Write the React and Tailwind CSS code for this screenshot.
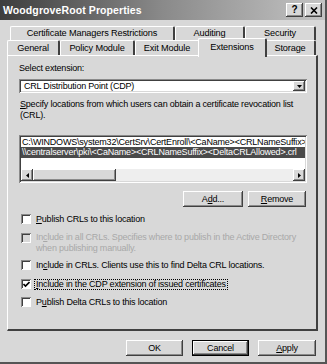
import React from "react";

const raised =
  "bg-[#d8d8d8] shadow-[inset_-1px_-1px_0_#404040,inset_1px_1px_0_#ffffff,inset_-2px_-2px_0_#8a8a8a]";
const sunken =
  "shadow-[inset_1px_1px_0_#8a8a8a,inset_-1px_-1px_0_#ffffff,inset_2px_2px_0_#404040,inset_-2px_-2px_0_#d8d8d8]";

function Tab({ w, children, sel }) {
  if (sel) {
    return (
      <div
        className={`relative z-10 -mx-[2px] -mt-[2px] h-[19px] bg-[#d8d8d8] border-l border-t border-white border-r-2 border-r-[#404040] rounded-t-[2px] flex items-center justify-center`}
        style={{ width: w + 4 }}
      >
        {children}
      </div>
    );
  }
  return (
    <div
      className="h-full bg-[#d8d8d8] border-l border-t border-white border-r-2 border-r-[#404040] rounded-t-[2px] flex items-center justify-center pt-[1px]"
      style={{ width: w }}
    >
      {children}
    </div>
  );
}

function Check({ checked, disabled }) {
  return (
    <div
      className={`w-[10px] h-[10px] shrink-0 flex items-center justify-center ${
        disabled ? "bg-[#d8d8d8]" : "bg-white"
      } shadow-[inset_1px_1px_0_#8a8a8a,inset_-1px_-1px_0_#ffffff,inset_2px_2px_0_#404040]`}
    >
      {checked && (
        <svg width="7" height="7" viewBox="0 0 7 7">
          <path d="M0.5 3 L2.5 5 L6.5 1" stroke="#000" strokeWidth="1.6" fill="none" />
        </svg>
      )}
    </div>
  );
}

function Btn({ w, children, def }) {
  return (
    <div
      className={`h-[16px] flex items-center justify-center ${
        def
          ? "bg-[#d8d8d8] border border-black shadow-[inset_-1px_-1px_0_#404040,inset_1px_1px_0_#ffffff,inset_-2px_-2px_0_#8a8a8a]"
          : raised
      }`}
      style={{ width: w }}
    >
      {children}
    </div>
  );
}

export default function App() {
  return (
    <div className="w-[327px] h-[364px] bg-[#d8d8d8] text-black font-['Liberation_Sans',Arial,sans-serif] text-[9px] tracking-[-0.2px] leading-none overflow-hidden border-r-2 border-b-2 border-r-[#555] border-b-[#555] flex flex-col">
      {/* Title bar */}
      <div className="h-[20px] shrink-0 bg-linear-to-r from-[#3e3e3e] via-[#8a8a8a] to-[#c4c4c4] flex items-center justify-between pl-[3px] pr-[3px]">
        <span className="text-white font-bold text-[10.5px] tracking-[0.1px]">WoodgroveRoot Properties</span>
        <div className="flex gap-[2px]">
          <div className={`w-[17px] h-[14px] ${raised} flex items-center justify-center font-bold text-[10px]`}>?</div>
          <div className={`w-[17px] h-[14px] ${raised} flex items-center justify-center`}>
            <svg width="8" height="7" viewBox="0 0 8 7">
              <path d="M1 0.5 L7 6.5 M7 0.5 L1 6.5" stroke="#000" strokeWidth="1.6" />
            </svg>
          </div>
        </div>
      </div>

      {/* Tabs */}
      <div className="ml-[7px] mt-[6px] w-[311px] text-[9.2px] tracking-[-0.15px]">
        <div className="flex pl-[3px] h-[14px]">
          <Tab w={165}>Certificate Managers Restrictions</Tab>
          <Tab w={70}>Auditing</Tab>
          <Tab w={71}>Security</Tab>
        </div>
        <div className="flex h-[15px]">
          <Tab w={53}>General</Tab>
          <Tab w={75}>Policy Module</Tab>
          <Tab w={65}>Exit Module</Tab>
          <Tab w={65} sel>Extensions</Tab>
          <Tab w={51}>Storage</Tab>
        </div>
      </div>

      {/* Panel */}
      <div className="ml-[7px] w-[311px] h-[276px] border-l border-t border-white border-r-2 border-b-2 border-r-[#404040] border-b-[#404040] pl-[11px] pr-[9px] pt-[7px]">
        <div className="h-[10px] flex items-center">Select extension:</div>
        <div className={`mt-[6px] h-[14px] bg-white ${sunken} flex items-center justify-between pl-[5px] pr-[2px]`}>
          <span>CRL Distribution Point (CDP)</span>
          <div className={`w-[12px] h-[10px] ${raised} flex items-center justify-center`}>
            <svg width="5" height="3" viewBox="0 0 5 3">
              <path d="M0 0 H5 L2.5 3 Z" fill="#000" />
            </svg>
          </div>
        </div>
        <div className="mt-[6px] leading-[11px] pl-[1px]">
          <span className="underline">S</span>pecify locations from which users can obtain a certificate revocation list (CRL).
        </div>
        <div className={`mt-[14px] h-[48px] bg-white ${sunken} p-[2px] flex flex-col`}>
          <div className="h-[10px] flex items-center pl-[1px] whitespace-nowrap overflow-hidden">
            C:\WINDOWS\system32\CertSrv\CertEnroll\&lt;CaName&gt;&lt;CRLNameSuffix&gt;&lt;DeltaCRLAllowed&gt;.crl
          </div>
          <div className="h-[11px] flex items-center pl-[1px] bg-[#4a4a4a] text-white whitespace-nowrap overflow-hidden">
            \\centralserver\pki\&lt;CaName&gt;&lt;CRLNameSuffix&gt;&lt;DeltaCRLAllowed&gt;.crl
          </div>
          <div className="flex-1" />
          <div className="h-[12px] flex bg-[#eeeeee]">
            <div className={`w-[12px] h-[12px] ${raised} flex items-center justify-center`}>
              <svg width="3" height="5" viewBox="0 0 3 5"><path d="M3 0 V5 L0 2.5 Z" fill="#000" /></svg>
            </div>
            <div className={`w-[83px] h-[12px] ${raised}`} />
            <div className="flex-1" />
            <div className={`w-[12px] h-[12px] ${raised} flex items-center justify-center`}>
              <svg width="3" height="5" viewBox="0 0 3 5"><path d="M0 0 V5 L3 2.5 Z" fill="#000" /></svg>
            </div>
          </div>
        </div>
        <div className="mt-[8px] flex justify-end gap-[5px] pr-[1px]">
          <Btn w={60}>A<span className="underline">d</span>d...</Btn>
          <Btn w={58}><span className="underline">R</span>emove</Btn>
        </div>
        <div className="mt-[6px] flex flex-col pl-[2px]">
          <div className="h-[12px] flex items-center gap-[5px]">
            <Check />
            <span><span className="underline">P</span>ublish CRLs to this location</span>
          </div>
          <div className="mt-[7px] flex items-start gap-[5px] text-[#a8a8a8]">
            <div className="mt-[1px]"><Check disabled /></div>
            <span className="leading-[11px]">
              In<span className="underline">c</span>lude in all CRLs. Specifies where to publish in the Active Directory when publishing manually.
            </span>
          </div>
          <div className="mt-[5px] h-[12px] flex items-center gap-[5px]">
            <Check />
            <span>In<span className="underline">c</span>lude in CRLs. Clients use this to find Delta CRL locations.</span>
          </div>
          <div className="mt-[7px] h-[12px] flex items-center gap-[5px]">
            <Check checked />
            <span className="outline-1 outline-dotted outline-black px-[1px] -ml-[1px]">
              <span className="underline">I</span>nclude in the CDP extension of issued certificates
            </span>
          </div>
          <div className="mt-[6px] h-[12px] flex items-center gap-[5px]">
            <Check />
            <span>P<span className="underline">u</span>blish Delta CRLs to this location</span>
          </div>
        </div>
      </div>

      {/* Bottom buttons */}
      <div className="mt-[9px] flex justify-end gap-[9px] pr-[9px]">
        <Btn w={57}>OK</Btn>
        <Btn w={57} def>Cancel</Btn>
        <Btn w={58}><span className="underline">A</span>pply</Btn>
      </div>
    </div>
  );
}
